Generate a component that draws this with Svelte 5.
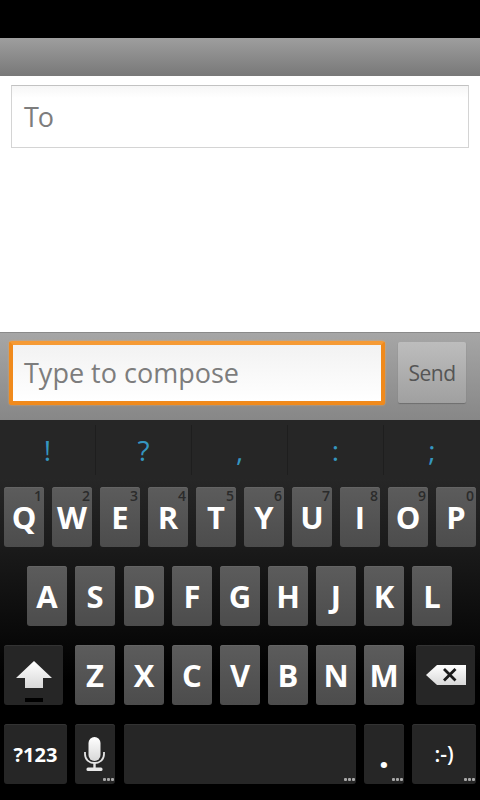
<script>
	const suggestions = ['!', '?', ',', ':', ';'];
	const row1 = [
		['Q', '1'], ['W', '2'], ['E', '3'], ['R', '4'], ['T', '5'],
		['Y', '6'], ['U', '7'], ['I', '8'], ['O', '9'], ['P', '0']
	];
	const row2 = ['A', 'S', 'D', 'F', 'G', 'H', 'J', 'K', 'L'];
	const row3 = ['Z', 'X', 'C', 'V', 'B', 'N', 'M'];
</script>

<div class="screen">
	<div class="status"></div>
	<div class="title"></div>

	<div class="content">
		<div class="to">To</div>
	</div>

	<div class="compose">
		<div class="input">Type to compose</div>
		<button class="send">Send</button>
	</div>

	<div class="keyboard">
		<div class="strip">
			{#each suggestions as s}
				<div class="sug">{s}</div>
			{/each}
		</div>

		<div class="row row1">
			{#each row1 as [letter, hint]}
				<div class="key">{letter}<span class="hint">{hint}</span></div>
			{/each}
		</div>

		<div class="row row2">
			{#each row2 as letter}
				<div class="key">{letter}</div>
			{/each}
		</div>

		<div class="row row3">
			<div class="key dark shift">
				<svg width="36" height="44" viewBox="0 0 36 44">
					<defs>
						<linearGradient id="w" x1="0" y1="0" x2="0" y2="1">
							<stop offset="0" stop-color="#ffffff" />
							<stop offset="1" stop-color="#d8d8d8" />
						</linearGradient>
					</defs>
					<path d="M18 0 L36 17 H27 V27 H9 V17 H0 Z" fill="url(#w)" />
					<rect x="9" y="37" width="18" height="4" fill="#000" />
				</svg>
			</div>
			{#each row3 as letter}
				<div class="key">{letter}</div>
			{/each}
			<div class="key dark back">
				<svg width="40" height="20" viewBox="0 0 40 20">
					<path d="M0 10 L11 0 H40 V20 H11 Z" fill="url(#w)" />
					<path d="M18 4 L29.5 15.5 M29.5 4 L18 15.5" stroke="#1a1a1a" stroke-width="2.8" fill="none" />
				</svg>
			</div>
		</div>

		<div class="row row4">
			<div class="key dark sym">?123</div>
			<div class="key dark mic">
				<svg width="21" height="34" viewBox="0 0 21 34">
					<rect x="4.5" y="0" width="12" height="24" rx="6" fill="url(#w)" />
					<path d="M1 15 V17 C1 22.5 5 26 10.5 26 C16 26 20 22.5 20 17 V15" stroke="#e4e4e4" stroke-width="1.8" fill="none" />
					<rect x="9.3" y="26" width="2.4" height="5" fill="#e4e4e4" />
					<rect x="2.5" y="30.5" width="16" height="3.5" rx="1.5" fill="#e8e8e8" />
				</svg>
				<span class="dots"><i></i><i></i><i></i></span>
			</div>
			<div class="key dark space"><span class="dots"><i></i><i></i><i></i></span></div>
			<div class="key dark period">.<span class="dots"><i></i><i></i><i></i></span></div>
			<div class="key dark smiley">:-)<span class="dots"><i></i><i></i><i></i></span></div>
		</div>
	</div>
</div>

<style>
	:global(body) {
		margin: 0;
		background: #000;
	}

	.screen {
		width: 480px;
		height: 800px;
		display: flex;
		flex-direction: column;
		overflow: hidden;
		font-family: 'Open Sans', 'DejaVu Sans', sans-serif;
	}

	.status {
		height: 38px;
		background: #000;
	}

	.title {
		height: 38px;
		background: linear-gradient(#9e9e9e, #787878);
	}

	.content {
		height: 256px;
		box-sizing: border-box;
		padding: 9px 11px 0;
		background: #fff;
	}

	.to {
		height: 63px;
		box-sizing: border-box;
		padding-left: 12px;
		display: flex;
		align-items: center;
		border: 1px solid #d4d4d4;
		border-top-color: #c2c2c2;
		background: linear-gradient(#f6f6f6, #fff 12px);
		color: #7d7d7d;
		font-size: 27px;
		letter-spacing: -1px;
	}

	.compose {
		height: 88px;
		box-sizing: border-box;
		padding: 8px 14px 0 9px;
		display: flex;
		align-items: flex-start;
		justify-content: space-between;
		border-top: 1px solid #8a8a8a;
		background: linear-gradient(#a6a6a6, #878787);
	}

	.input {
		width: 376px;
		height: 64px;
		box-sizing: border-box;
		padding: 0 0 2px 11px;
		display: flex;
		align-items: center;
		border: 4px solid #f08a1c;
		border-top-color: #f59a35;
		border-radius: 3px;
		background: linear-gradient(#f2f2f2, #fff);
		box-shadow: 0 0 2px #f8a850;
		color: #7d7d7d;
		font-size: 27px;
	}

	.send {
		width: 68px;
		height: 61px;
		margin-top: 1px;
		padding: 0;
		border: none;
		border-radius: 2px;
		background: linear-gradient(#bdbdbd, #a0a0a0);
		box-shadow: 0 1px 1px #6e6e6e;
		color: #555;
		font-family: inherit;
		font-size: 21px;
		letter-spacing: -0.5px;
	}

	.keyboard {
		height: 380px;
		display: flex;
		flex-direction: column;
		background: linear-gradient(#272727 56px, #1c1c1c 120px, #000 260px);
	}

	.strip {
		height: 59px;
		display: flex;
		background: #262626;
		flex-shrink: 0;
	}

	.sug {
		width: 96px;
		height: 50px;
		margin-top: 5px;
		box-sizing: border-box;
		display: flex;
		align-items: center;
		justify-content: center;
		border-right: 1px solid #1e1e1e;
		color: #3596c0;
		font-size: 28px;
	}

	.sug:last-child {
		border-right: none;
	}

	.row {
		height: 60px;
		margin-top: 19px;
		display: flex;
		gap: 8px;
		flex-shrink: 0;
	}

	.row1 {
		margin-top: 8px;
		padding-left: 4px;
	}

	.row2 {
		padding-left: 27px;
	}

	.row3,
	.row4 {
		padding-left: 4px;
	}

	.key {
		position: relative;
		width: 40px;
		height: 60px;
		display: flex;
		align-items: center;
		justify-content: center;
		flex-shrink: 0;
		border-radius: 3px;
		background: linear-gradient(#5c5c5c, #4c4c4c);
		box-shadow: inset 0 1px 0 #646464;
		color: #fff;
		font-size: 31px;
		font-weight: 700;
	}

	/* the third column sits a pixel further right on these rows */
	.row2 .key:nth-child(3),
	.row3 .key:nth-child(3) {
		margin-left: 1px;
	}

	.hint {
		position: absolute;
		top: 0;
		right: 2px;
		color: #2b2b2b;
		font-size: 14px;
		font-weight: 600;
		line-height: 18px;
	}

	.key.dark {
		background: #262626;
		box-shadow: inset 0 1px 0 #333;
	}

	.shift {
		width: 59px;
		margin-right: 4px;
		align-items: flex-end;
	}

	.back {
		width: 59px;
		margin-left: 4px;
	}

	.sym {
		width: 63px;
		font-size: 20px;
	}

	.mic svg {
		margin-right: 2px;
	}

	.row4 .space {
		width: 232px;
		margin-left: 1px;
	}

	.period {
		font-size: 36px;
	}

	.smiley {
		width: 64px;
		font-size: 21px;
		font-weight: 600;
	}

	.dots {
		position: absolute;
		right: 1px;
		bottom: 3px;
		display: flex;
		gap: 1px;
	}

	.dots i {
		width: 3px;
		height: 3px;
		border-radius: 1px;
		background: #a8a8a8;
	}
</style>
